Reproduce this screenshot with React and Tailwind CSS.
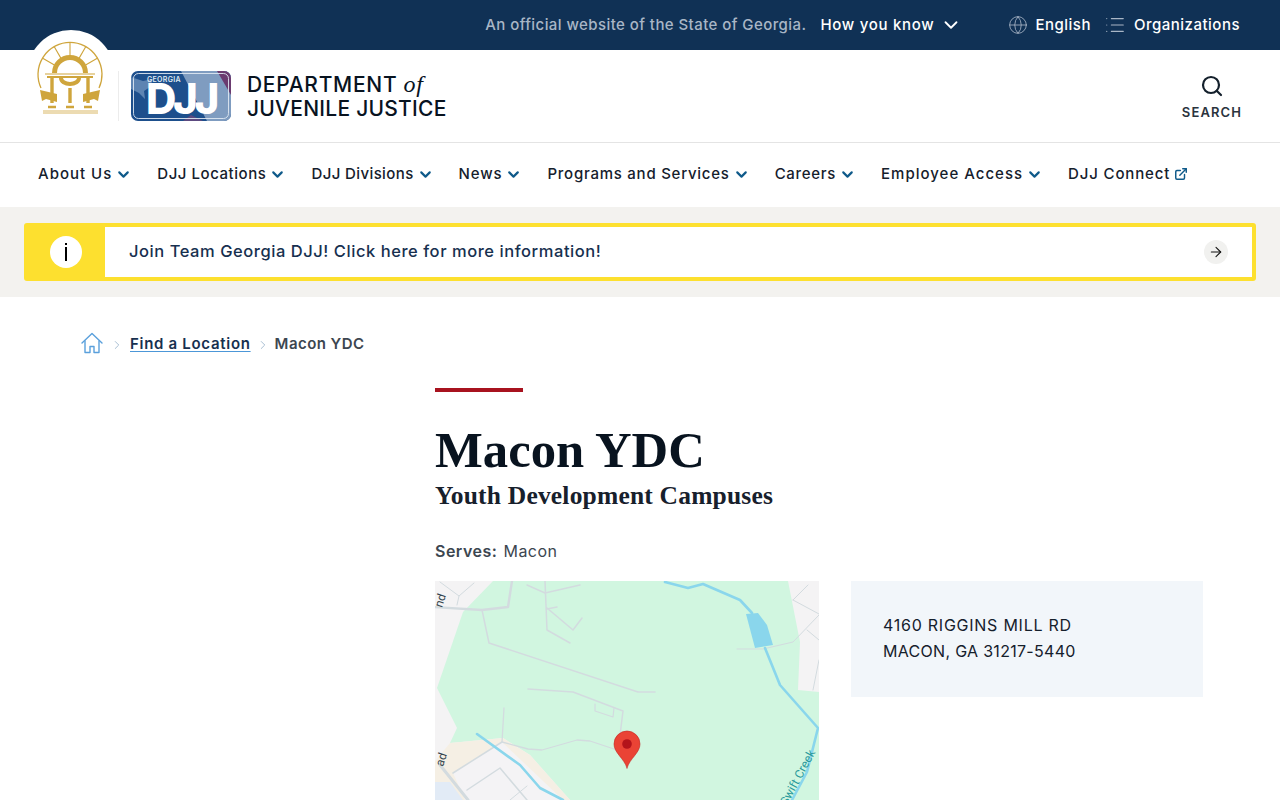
import React from "react";
import { ChevronDown, Search, ExternalLink, ArrowRight, ChevronRight, Globe, List } from "lucide-react";

const navItems = [
  { label: "About Us", track: "tracking-[1px]" },
  { label: "DJJ Locations", track: "tracking-[0.55px]" },
  { label: "DJJ Divisions", track: "tracking-[0.39px]" },
  { label: "News", track: "tracking-[0.85px]" },
  { label: "Programs and Services", track: "tracking-[0.75px]" },
  { label: "Careers", track: "tracking-[0.7px]" },
  { label: "Employee Access", track: "tracking-[1px]" },
];

const Seal = () => (
  <svg viewBox="0 0 70 76" className="w-[70px] h-[76px]" fill="none" stroke="#cfa53c">
    {/* outer ring and rays */}
    <path d="M5 48 A32 32 0 1 1 63 48" strokeWidth="1.3" />
    <path d="M34 2 V16 M50 6.3 L43 18.4 M18 6.3 L25 18.4 M61.7 18 L49.6 25 M6.3 18 L18.4 25" strokeWidth="1.1" />
    {/* arch */}
    <path d="M18.5 33 A15.5 15.5 0 0 1 49.5 33" strokeWidth="5" />
    <path d="M25 38 A9 6 0 0 0 43 38" strokeWidth="4" />
    {/* entablature */}
    <path d="M9 34 H59" strokeWidth="1.2" />
    <path d="M11 37 H57" strokeWidth="2" />
    {/* columns */}
    <path d="M16 38 V63 M34 48 V63 M52 38 V63" strokeWidth="3.4" />
    {/* ribbon */}
    <path d="M4 50 L21 54 L21 62 L10 59 L6 61 Z M64 50 L47 54 L47 62 L58 59 L62 61 Z" fill="#cfa53c" stroke="none" />
    {/* bases */}
    <path d="M12 67 H20 M30 67 H38 M48 67 H56" strokeWidth="2.6" />
    <path d="M7 71 H62" strokeWidth="0.8" />
    <path d="M7 73 H62" strokeWidth="0.8" />
  </svg>
);

const DjjLogo = () => (
  <svg viewBox="0 0 100 50" className="w-[100px] h-[50px]">
    <defs>
      <clipPath id="logoClip"><rect width="100" height="50" rx="7" /></clipPath>
    </defs>
    <g clipPath="url(#logoClip)">
      <rect width="100" height="50" fill="#1d4f8c" />
      <path d="M50 0 H100 V50 H76 Z" fill="#7f9cc0" />
      <path d="M86 0 H100 V24 Z" fill="#6b3b70" />
      <path d="M52 50 L60 44 L72 50 Z" fill="#5c4a80" />
      <path d="M0 6 L12 10 L22 8 L19 16 L13 20 L14 28 L8 22 L0 18 Z" fill="#5d84b2" />
    </g>
    <rect x="2.5" y="2.5" width="95" height="45" rx="5" fill="none" stroke="#dfe8f2" strokeWidth="0.9" />
    <text x="16" y="10.5" fontFamily="Inter, sans-serif" fontWeight="600" fontSize="7" letterSpacing="0.3" fill="#dfe8f2">GEORGIA</text>
    <text x="15" y="43" fontFamily="Inter, sans-serif" fontWeight="800" fontSize="42" letterSpacing="-3.3" fill="#ffffff">DJJ</text>
  </svg>
);

const HomeIcon = () => (
  <svg viewBox="0 0 22 22" className="w-[22px] h-[22px]" fill="none" stroke="#5aa0dc" strokeWidth="1.4" strokeLinejoin="round" strokeLinecap="round">
    <path d="M1 11 L11 1.5 L21 11" />
    <path d="M4 9 V20.5 H9 V14.5 H13 V20.5 H18 V9" />
  </svg>
);

const MapArt = () => (
  <svg viewBox="0 0 384 219" className="block w-full h-full" fill="none" strokeLinecap="round" strokeLinejoin="round">
    <rect width="384" height="219" fill="#f4f3f4" />
    <path d="M58 0 L28 31 L2 107 L22 147 L15 162 L68 157 L95 174 L135 219 H384 V111 L363 109 L365 61 L353 0 Z" fill="#d1f6e0" />
    <path d="M15 162 L68 157 L95 174 L135 219 H0 V180 Z" fill="#f5efe4" />
    <path d="M18 192 L67 161 L128 219 H30 Z" fill="#f4f3f5" />
    <path d="M0 201 H15 L28 219 H0 Z" fill="#e2ebf6" />
    {/* roads */}
    <g stroke="#d3dbdf">
      <path d="M-2 26 L47 29 L73 26 L77 0" strokeWidth="2.4" />
      <path d="M47 29 L54 62 L203 111 L220 111" strokeWidth="1.5" />
      <path d="M92 4 L110 12 L145 4 M110 0 L112 49 L135 62 M112 27 L138 49 L147 37 M112 28 L122 26" strokeWidth="1.5" />
      <path d="M93 108 L138 111 L188 130 L185 154" strokeWidth="1.5" />
      <path d="M160 123 L160 130 L178 136 L179 127" strokeWidth="1.2" />
      <path d="M69 127 L67 161 L93 168 L107 169 L142 159 L155 160 L182 169" strokeWidth="1.3" />
      <path d="M67 161 L18 192 M32 209 L65 187 L92 219" strokeWidth="1.5" />
      <path d="M5 184 L33 219" strokeWidth="3" />
      <path d="M302 68 L328 68 L358 61 L384 34 M358 19 L373 4 M358 19 L384 33 M372 49 L384 59 M384 79 L378 109 M75 219 L92 205" strokeWidth="1" />
      <path d="M5 1 L24 15 L39 2 M24 15 L22 24" strokeWidth="1" />
    </g>
    {/* water */}
    <path d="M311 33 L323 32 L332 44 L338 64 L320 67 Z" fill="#8ad6ec" />
    <g stroke="#8ad6ec" strokeWidth="2.6">
      <path d="M230 1 L253 7 L268 3 L305 19 L317 32" />
      <path d="M330 67 L345 104 L383 147 L372 191 L357 219" />
      <path d="M42 153 L85 184 L105 207 L128 219" />
    </g>
    {/* labels */}
    <text transform="translate(352 225) rotate(-62)" fontFamily="Roboto, sans-serif" fontSize="12" fill="#2a9a9c">Swift Creek</text>
    <text transform="translate(7 27) rotate(-72)" fontFamily="Roboto, sans-serif" fontSize="12" fill="#37474f">nd</text>
    <text transform="translate(8 186) rotate(-72)" fontFamily="Roboto, sans-serif" fontSize="12" fill="#37474f">ad</text>
    {/* marker */}
    <path d="M192 187 C189 177 179 172 179 163 A13 13 0 1 1 205 163 C205 172 195 177 192 187 Z" fill="#ea4335" stroke="#c5221f" strokeWidth="0.6" />
    <circle cx="192" cy="163" r="4.8" fill="#b3141b" />
  </svg>
);

export default function App() {
  return (
    <div className="relative bg-white font-['Inter',sans-serif] text-[#1a2a3a]">
      {/* Top bar */}
      <div className="h-[50px] bg-[#103155] flex items-center justify-end pr-[40px] text-[15px] font-medium">
        <span className="text-[#a9b6c6] tracking-[0.43px]">An official website of the State of Georgia.</span>
        <span className="ml-[14px] text-white tracking-[0.7px]">How you know</span>
        <ChevronDown size={22} strokeWidth={2} className="ml-[6px] text-white" />
        <Globe size={20} strokeWidth={1} className="ml-[46px] text-[#a9b6c6]" />
        <span className="ml-[7px] text-white tracking-[0.5px]">English</span>
        <List size={22} strokeWidth={1.2} className="ml-[13px] text-[#a9b6c6]" />
        <span className="ml-[8px] text-white tracking-[0.5px]">Organizations</span>
      </div>

      {/* Seal sits over the top bar */}
      <div className="absolute left-[27px] top-[30px] w-[88px] h-[88px] rounded-full bg-white flex justify-center pt-[10px]">
        <Seal />
      </div>

      {/* Header */}
      <div className="relative h-[93px] border-b border-[#e4e4e4] flex items-center pl-[118px] pr-[38px]">
        <div className="w-px h-[50px] bg-[#ececec] mr-[12px]" />
        <DjjLogo />
        <div className="ml-[16px] text-[21px] leading-[24px] text-[#08131f] font-medium">
          <div className="tracking-[0.7px]">DEPARTMENT <em className="font-['Liberation_Serif',serif] font-normal text-[24px]">of</em></div>
          <div className="tracking-[0.25px]">JUVENILE JUSTICE</div>
        </div>
        <div className="ml-auto flex flex-col items-center pt-[4px]">
          <Search size={24} strokeWidth={2.2} className="text-[#14202c]" />
          <span className="mt-[5px] text-[13px] font-semibold tracking-[1.1px] text-[#2a333d]">SEARCH</span>
        </div>
      </div>

      {/* Nav */}
      <nav className="h-[64px] pl-[38px] pb-[2px] flex items-center gap-[25px] text-[15px] font-medium text-[#15202c]">
        {navItems.map((item) => (
          <div key={item.label} className="flex items-center gap-[3px]">
            <span className={item.track}>{item.label}</span>
            <ChevronDown size={17} strokeWidth={3} className="text-[#0f5a8a]" />
          </div>
        ))}
        <div className="flex items-center gap-[4px]">
          <span className="tracking-[0.85px]">DJJ Connect</span>
          <ExternalLink size={14} strokeWidth={2.5} className="text-[#0f5a8a]" />
        </div>
      </nav>

      {/* Alert */}
      <div className="h-[90px] bg-[#f3f2ef] px-[24px] py-[16px]">
        <div className="h-[58px] flex rounded-[3px] border-[4px] border-[#fde02f] bg-white">
          <div className="w-[77px] bg-[#fde02f] flex items-center justify-center pr-[1px]">
            <div className="w-[32px] h-[32px] rounded-full bg-white flex flex-col items-center justify-center gap-[2px]">
              <div className="w-[2px] h-[2px] bg-black" />
              <div className="w-[2px] h-[14px] bg-black" />
            </div>
          </div>
          <div className="flex-1 flex items-center justify-between pl-[24px] pr-[24px]">
            <span className="pb-[2px] text-[16.5px] font-medium tracking-[0.55px] text-[#17304f]">Join Team Georgia DJJ! Click here for more information!</span>
            <div className="w-[24px] h-[24px] rounded-full bg-[#f1f1ef] flex items-center justify-center">
              <ArrowRight size={16} strokeWidth={1.6} className="text-[#111]" />
            </div>
          </div>
        </div>
      </div>

      {/* Breadcrumb */}
      <div className="pl-[81px] pt-[35px] h-[91px] flex items-start gap-[7px] text-[15px] font-semibold">
        <HomeIcon />
        <div className="h-[23px] flex items-center gap-[5px] pt-[2px]">
          <ChevronRight size={14} strokeWidth={1.5} className="text-[#9db6cd]" />
          <span className="ml-[1px] text-[#17304f] underline underline-offset-2 decoration-[#4c97d8] tracking-[0.7px]">Find a Location</span>
          <ChevronRight size={14} strokeWidth={1.5} className="text-[#9db6cd]" />
          <span className="text-[#3c4650] tracking-[0.45px]">Macon YDC</span>
        </div>
      </div>

      {/* Main */}
      <main className="pl-[435px] pr-[77px]">
        <div className="w-[88px] h-[4px] bg-[#a8131f]" />
        <h1 className="mt-[29px] font-['Liberation_Serif',serif] font-bold text-[50.7px] leading-[58px] text-[#08131f]">Macon YDC</h1>
        <h2 className="mt-[2px] font-['Liberation_Serif',serif] font-bold text-[25.5px] leading-[30px] tracking-[0.2px] text-[#17202c]">Youth Development Campuses</h2>
        <div className="mt-[25px] h-[30px] flex items-center gap-[6px] text-[16px] tracking-[0.5px] text-[#3c4650]">
          <span className="font-semibold">Serves:</span>
          <span className="font-normal">Macon</span>
        </div>
        <div className="mt-[15px] flex gap-[32px]">
          <div className="w-[384px] h-[219px]">
            <MapArt />
          </div>
          <div className="w-[352px] h-[116px] bg-[#f2f6fa] px-[32px] pb-[2px] flex flex-col justify-center text-[16px] leading-[26px] text-[#15202c]">
            <div className="tracking-[0.75px]">4160 RIGGINS MILL RD</div>
            <div className="tracking-[0.3px]">MACON, GA 31217-5440</div>
          </div>
        </div>
      </main>
    </div>
  );
}
